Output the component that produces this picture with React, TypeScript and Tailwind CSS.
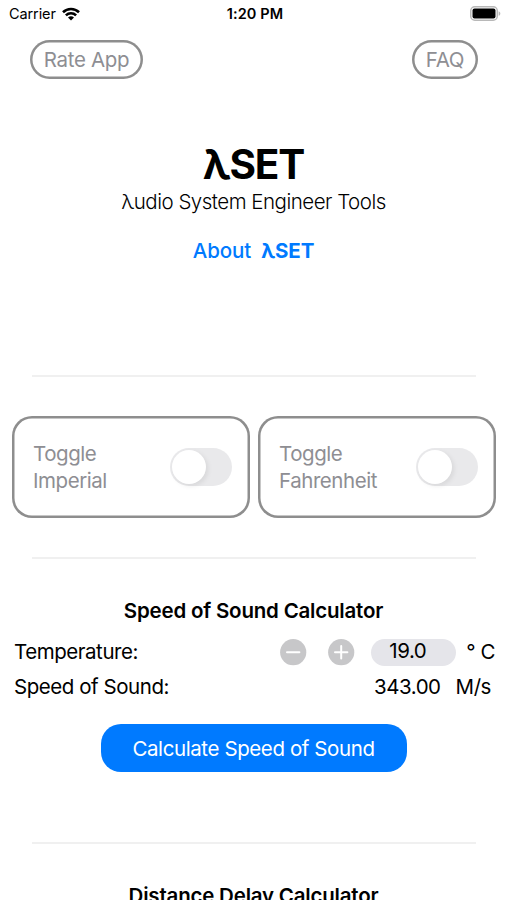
import { useState } from 'react';

interface ToggleCardProps {
  unit: string;
}

function ToggleCard({ unit }: ToggleCardProps) {
  const [on, setOn] = useState(false);

  return (
    <div className="flex h-[102px] w-[238px] items-center justify-between rounded-[20px] pr-[18px] pl-[21px] shadow-[inset_0_0_0_2.5px_#8e8e8e]">
      <span className="leading-[27px] text-[#8e8e93]">
        Toggle
        <br />
        {unit}
      </span>
      <button
        role="switch"
        aria-checked={on}
        aria-label={`Toggle ${unit}`}
        onClick={() => setOn(!on)}
        className={`flex h-[38px] w-[62px] items-center rounded-full p-[2px] ${on ? 'justify-end bg-[#34c759]' : 'bg-[#e9e9eb]'}`}
      >
        <span className="h-[34px] w-[34px] rounded-full bg-white shadow-[2px_2px_5px_rgba(0,0,0,0.08)]" />
      </button>
    </div>
  );
}

function Divider() {
  return <div className="mx-8 h-[2px] w-[444px] bg-[#f0f0f0]" />;
}

function WifiIcon() {
  return (
    <svg width="18" height="14" viewBox="0 0 18 14" fill="none" stroke="black" strokeWidth="2.6">
      <path d="M1 5.2a11.5 11.5 0 0 1 16 0" />
      <path d="M3.9 8.4a7.3 7.3 0 0 1 10.2 0" />
      <path d="M9 13.6 6 10.6a4.3 4.3 0 0 1 6 0z" fill="black" stroke="none" />
    </svg>
  );
}

function BatteryIcon() {
  return (
    <svg width="31" height="15" viewBox="0 0 31 15">
      <rect x="0.75" y="0.75" width="26.5" height="13.5" rx="4" fill="white" stroke="#b8b8b8" strokeWidth="1.5" />
      <rect x="2.5" y="2.5" width="23" height="10" rx="2" fill="black" />
      <path d="M28.6 5.2c2.3.8 2.3 3.8 0 4.6z" fill="#b8b8b8" />
    </svg>
  );
}

interface StepButtonProps {
  label: string;
  plus?: boolean;
  onClick: () => void;
}

function StepButton({ label, plus = false, onClick }: StepButtonProps) {
  return (
    <button aria-label={label} onClick={onClick} className="h-[27px] w-[27px]">
      <svg width="27" height="27" viewBox="0 0 27 27" stroke="white" strokeWidth="2" strokeLinecap="round">
        <circle cx="13.2" cy="13.2" r="13.1" fill="#c7c7c9" stroke="none" />
        <path d="M7 13.2h12.4" />
        {plus && <path d="M13.2 7v12.4" />}
      </svg>
    </button>
  );
}

export default function App() {
  const [temperature, setTemperature] = useState(19);
  const [speed, setSpeed] = useState(343);

  const calculate = () => setSpeed(331.6 + 0.6 * temperature);

  return (
    <div className="h-[900px] w-[507px] overflow-hidden bg-white font-['Inter','Liberation_Sans',sans-serif] text-[20.5px] tracking-[-0.45px] text-black">
      {/* Status bar */}
      <div className="grid h-[27px] grid-cols-3 items-center pr-[6px] pl-[9px] text-[14.5px] tracking-[-0.1px]">
        <div className="flex items-center gap-[6px]">
          <span>Carrier</span>
          <WifiIcon />
        </div>
        <span className="text-center font-semibold tracking-[0.1px]">1:20 PM</span>
        <div className="flex justify-end">
          <BatteryIcon />
        </div>
      </div>

      <header className="mt-[13px] flex justify-between pr-[29px] pl-[30px] tracking-[-0.35px] text-[#8e8e93]">
        <button className="h-[39px] w-[113px] rounded-full pt-[2px] shadow-[inset_0_0_0_2.5px_#8e8e8e]">Rate App</button>
        <button className="h-[39px] w-[66px] rounded-full pt-[2px] shadow-[inset_0_0_0_2.5px_#8e8e8e]">FAQ</button>
      </header>

      {/* Title */}
      <section className="mt-[62px] flex flex-col items-center">
        <h1 className="text-[40.5px] leading-[47px] font-bold tracking-[-1.2px]">λSET</h1>
        <p className="leading-7 font-light tracking-[-0.5px]">λudio System Engineer Tools</p>
        <button className="mt-[21px] flex gap-[10px] leading-7 font-medium tracking-[-0.1px] text-[#007aff]">
          About <span className="font-bold">λSET</span>
        </button>
      </section>

      <div className="mt-[110px]">
        <Divider />
      </div>
      <section className="my-[39px] flex gap-2 pl-3">
        <ToggleCard unit="Imperial" />
        <ToggleCard unit="Fahrenheit" />
      </section>
      <Divider />

      {/* Speed of sound */}
      <section className="mt-[38px]">
        <h2 className="text-center leading-7 font-semibold tracking-[-0.2px]">Speed of Sound Calculator</h2>
        <div className="mt-[9px] flex h-[36px] items-center pr-3 pl-[14px]">
          <span className="flex-1">Temperature:</span>
          <StepButton label="Decrease temperature" onClick={() => setTemperature(temperature - 1)} />
          <div className="ml-[21px] flex">
            <StepButton plus label="Increase temperature" onClick={() => setTemperature(temperature + 1)} />
          </div>
          <span className="ml-4 flex h-[27px] w-[85px] items-center rounded-full bg-[#e5e5ea] pb-[2px] pl-[18px]">
            {temperature.toFixed(1)}
          </span>
          <span className="ml-[10px]">° C</span>
        </div>
        <div className="flex h-[35px] items-center pr-4 pl-[14px]">
          <span className="flex-1">Speed of Sound:</span>
          <span>{speed.toFixed(2)}</span>
          <span className="ml-[15px]">M/s</span>
        </div>
        <button
          onClick={calculate}
          className="mx-auto mt-[19px] block h-[48px] w-[306px] rounded-[20px] bg-[#007aff] pt-[2px] tracking-[-0.4px] text-white"
        >
          Calculate Speed of Sound
        </button>
      </section>

      <div className="mt-[70px]">
        <Divider />
      </div>
      <h2 className="mt-[38px] text-center leading-7 font-semibold tracking-[-0.2px]">Distance Delay Calculator</h2>
    </div>
  );
}
